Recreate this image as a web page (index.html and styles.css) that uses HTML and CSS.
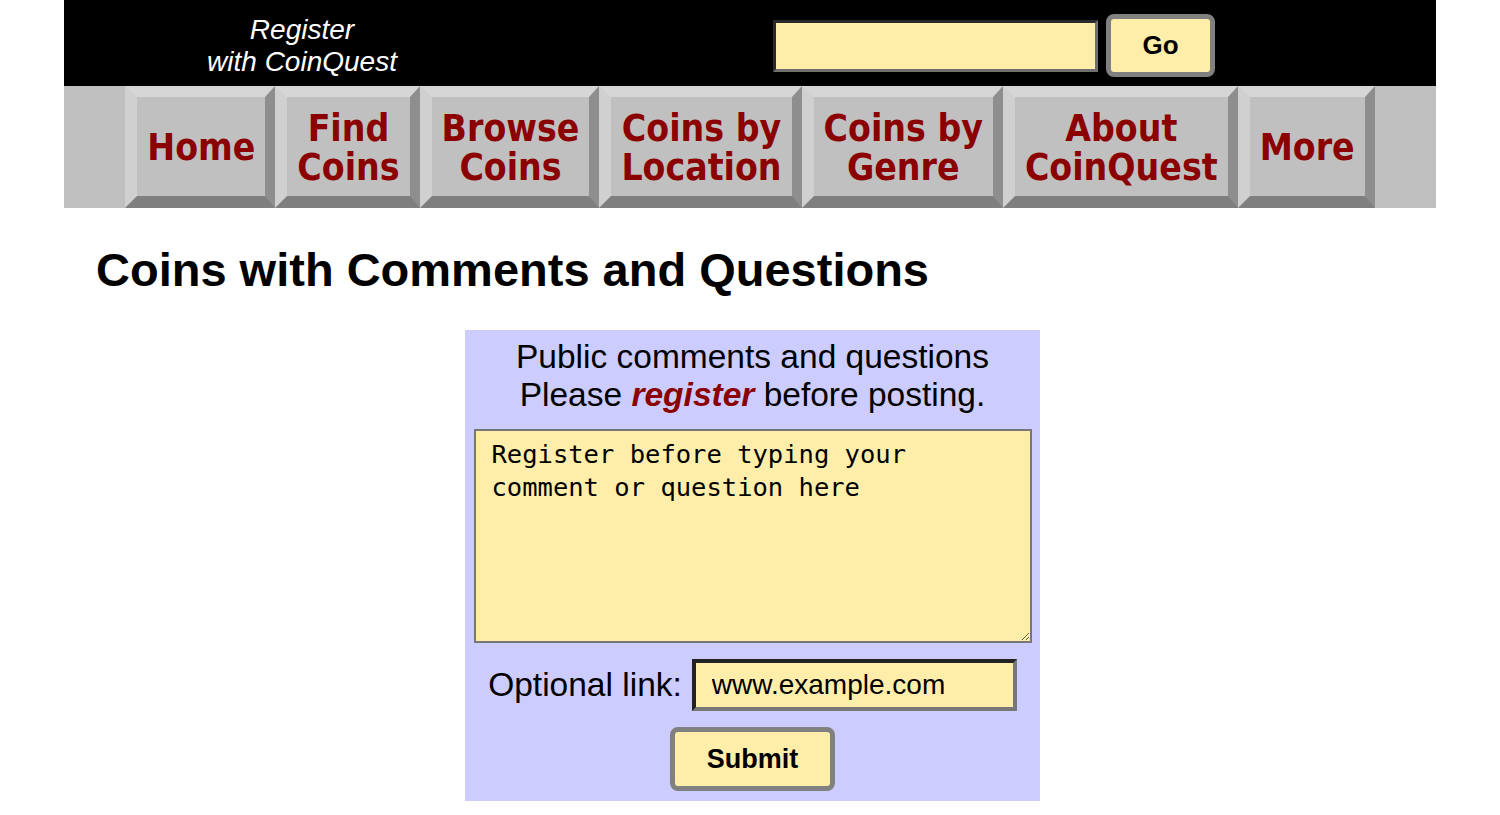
FILE: index.html
```html
<!DOCTYPE html>
<html lang="en">
<head>
    <meta charset="UTF-8">
    <title>CoinQuest - Coins with Comments and Questions</title>
    <link rel="stylesheet" href="styles.css">
</head>
<body>
    <div class="page">
        <div class="top-bar">
            <a href="#" class="register-link">Register<br>with CoinQuest</a>
            <form class="search">
                <input type="text" class="search-box">
                <button type="button" class="go-button">Go</button>
            </form>
        </div>

        <nav class="main-nav">
            <a href="#" class="nav-button">Home</a>
            <a href="#" class="nav-button">Find<br>Coins</a>
            <a href="#" class="nav-button">Browse<br>Coins</a>
            <a href="#" class="nav-button">Coins by<br>Location</a>
            <a href="#" class="nav-button">Coins by<br>Genre</a>
            <a href="#" class="nav-button">About<br>CoinQuest</a>
            <a href="#" class="nav-button">More</a>
        </nav>

        <h1 class="page-title">Coins with Comments and Questions</h1>

        <form class="comment-box">
            <p class="comment-intro">Public comments and questions<br>Please <a href="#" class="register-word">register</a> before posting.</p>
            <textarea class="comment-text">Register before typing your comment or question here</textarea>
            <div class="link-row">
                <label class="link-label" for="link">Optional link:</label>
                <input type="text" id="link" class="link-box" value="www.example.com">
            </div>
            <button type="button" class="submit-button">Submit</button>
        </form>
    </div>
</body>
</html>
```

FILE: styles.css
```css
body {
    margin: 0;
    background-color: #fff;
    font-family: "Liberation Sans", Arial, sans-serif;
}
.page {
    width: 1372px;
    margin: 0 auto;
}

/* top black bar */
.top-bar {
    display: flex;
    align-items: center;
    box-sizing: border-box;
    height: 86px;
    padding-top: 5px;
    background-color: #000;
}
.register-link {
    width: 476px;
    text-align: center;
    color: #fff;
    font-style: italic;
    font-size: 28px;
    line-height: 32px;
    text-decoration: none;
}
.search {
    display: flex;
    align-items: center;
    gap: 8px;
    margin: 0 0 0 233px;
}
.search-box {
    box-sizing: border-box;
    width: 325px;
    height: 52px;
    background-color: #ffeeaa;
    border: 3px solid;
    border-color: #2a2a2a #6f6f6f #6f6f6f #2a2a2a;
    font-size: 26px;
}
.go-button {
    box-sizing: border-box;
    width: 109px;
    height: 63px;
    background-color: #ffeeaa;
    border: 5px solid #808080;
    border-radius: 8px;
    font-family: "Liberation Sans", Arial, sans-serif;
    font-weight: bold;
    font-size: 26px;
    color: #000;
}

/* grey navigation buttons */
.main-nav {
    display: flex;
    justify-content: center;
    background-color: #c0c0c0;
}
.nav-button {
    display: flex;
    align-items: center;
    justify-content: center;
    box-sizing: border-box;
    height: 122px;
    padding: 2px 10px 0;
    border-style: solid;
    border-width: 11px 10px 12px 12px;
    border-color: #d6d6d6 #8e8e8e #7f7f7f #d0d0d0;
    background-color: #c0c0c0;
    text-align: center;
    text-decoration: none;
    color: #8b0000;
    font-family: "DejaVu Sans Condensed", "DejaVu Sans", sans-serif;
    font-stretch: condensed;
    font-weight: bold;
    font-size: 37px;
    line-height: 39px;
}

.page-title {
    margin: 35px 0 33px 32px;
    font-size: 47px;
    line-height: 54px;
    color: #000;
}

/* comment form */
.comment-box {
    display: flex;
    flex-direction: column;
    align-items: center;
    width: 575px;
    margin: 0 0 0 401px;
    padding: 8px 0 10px;
    background-color: #ccccff;
}
.comment-intro {
    margin: 0 0 15px;
    text-align: center;
    font-size: 33.5px;
    line-height: 38px;
}
.register-word {
    color: #8b0000;
    font-weight: bold;
    font-style: italic;
    text-decoration: none;
}
.comment-text {
    box-sizing: border-box;
    width: 558px;
    height: 214px;
    margin: 0 0 16px;
    padding: 7px 16px;
    background-color: #ffeeaa;
    border: 2px solid #777;
    font-family: "DejaVu Sans Mono", "Liberation Mono", monospace;
    font-size: 25.5px;
    line-height: 33px;
    color: #000;
}
.link-row {
    display: flex;
    align-items: center;
    gap: 10px;
    margin: 0 0 16px;
}
.link-label {
    font-size: 33.5px;
}
.link-box {
    box-sizing: border-box;
    width: 325px;
    height: 52px;
    padding: 0 16px;
    background-color: #ffeeaa;
    border: 4px solid;
    border-color: #222 #777 #777 #222;
    font-family: "Liberation Sans", Arial, sans-serif;
    font-size: 28px;
    color: #000;
}
.submit-button {
    box-sizing: border-box;
    width: 165px;
    height: 64px;
    background-color: #ffeeaa;
    border: 5px solid #808080;
    border-radius: 8px;
    font-family: "Liberation Sans", Arial, sans-serif;
    font-weight: bold;
    font-size: 27px;
    color: #000;
}
```
